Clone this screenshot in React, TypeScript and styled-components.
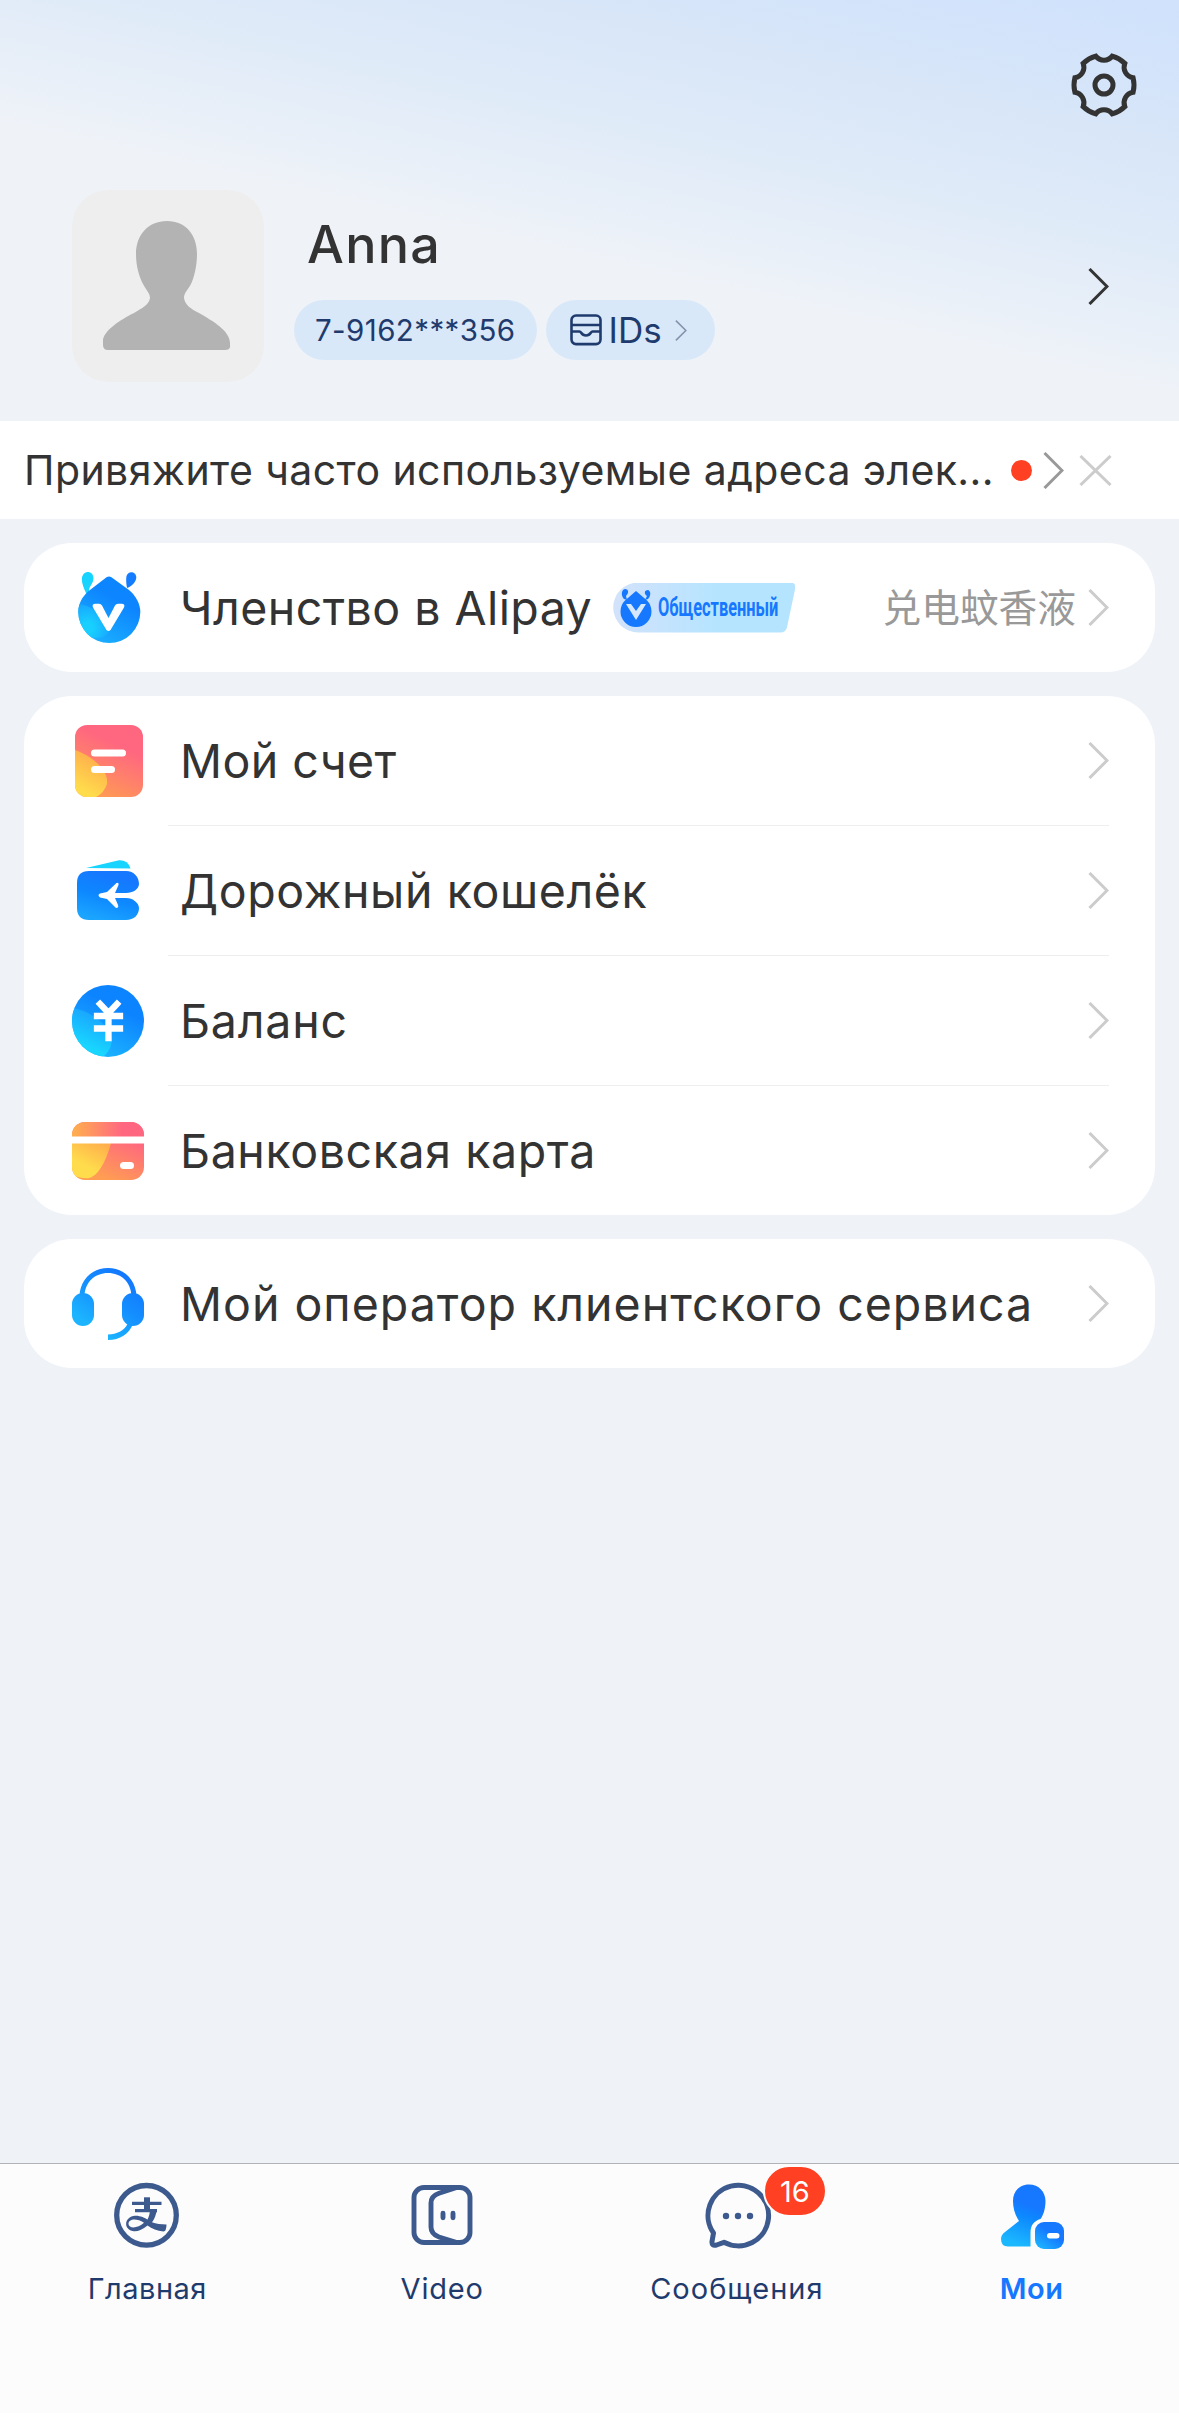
import React from "react";
import styled, { createGlobalStyle } from "styled-components";

const Global = createGlobalStyle`
  *{box-sizing:border-box}
  body{margin:0;background:#eff3f8}
`;

const Screen = styled.main`
  width: 1179px;
  height: 2413px;
  display: flex;
  flex-direction: column;
  overflow: hidden;
  background: #eff3f8;
  color: #333;
  font-family: Inter, "Liberation Sans", "Noto Sans CJK SC", sans-serif;
`;

const Header = styled.header`
  height: 421px;
  flex: none;
  padding: 50px 40px 0 72px;
  background: linear-gradient(193deg, #d0e2fc 0%, #d2e3fb 8%, #d8e6f8 21%, #e0ebf8 37%, #e8eff8 48%, #eff3f8 57%);
`;

const TopBar = styled.div`
  display: flex;
  justify-content: flex-end;
  height: 140px;
`;

const Profile = styled.section`
  display: flex;
  align-items: center;
  height: 192px;
  padding-right: 30px;
`;

const Avatar = styled.div`
  width: 192px;
  height: 192px;
  border-radius: 36px;
  background: #eee;
  overflow: hidden;
`;

const Identity = styled.div`
  flex: 1;
  align-self: stretch;
  margin-left: 30px;
  padding-top: 20px;
`;

const Name = styled.h1`
  margin: 0 0 20px 13px;
  height: 70px;
  font-size: 52px;
  line-height: 70px;
  font-weight: 450;
  letter-spacing: 1.3px;
`;

const Pills = styled.div`
  display: flex;
  gap: 9px;
`;

const Pill = styled.div<{ $width: number; $pad: number; $size: number; $spacing: number }>`
  width: ${(p) => p.$width}px;
  height: 60px;
  border-radius: 30px;
  background: #d9e8f8;
  color: #1f3b6d;
  display: flex;
  align-items: center;
  padding-left: ${(p) => p.$pad}px;
  font-size: ${(p) => p.$size}px;
  letter-spacing: ${(p) => p.$spacing}px;
`;

const PillText = styled.span`
  margin: 0 13px 0 7px;
`;

const Notice = styled.section`
  height: 98px;
  flex: none;
  background: #fff;
  display: flex;
  align-items: center;
  padding-left: 24px;
`;

const NoticeText = styled.span`
  width: 987px;
  font-size: 41px;
  letter-spacing: 0.42px;
  white-space: nowrap;
`;

const Dot = styled.i`
  width: 21px;
  height: 21px;
  border-radius: 50%;
  background: #ff4023;
  margin-right: 11px;
`;

const CloseSlot = styled.span`
  margin-left: 15px;
  display: flex;
`;

const Groups = styled.div`
  flex: 1;
  padding: 24px;
  display: flex;
  flex-direction: column;
  gap: 24px;
`;

const Card = styled.section`
  background: #fff;
  border-radius: 48px;
  padding: 0 46px 0 48px;
`;

const Row = styled.div`
  height: 129px;
  display: flex;
  align-items: center;
`;

const Divider = styled.div`
  height: 1px;
  margin-left: 96px;
  background: #eee;
`;

const IconSlot = styled.span`
  width: 72px;
  height: 72px;
  display: flex;
`;

const Label = styled.span<{ $spacing: number }>`
  margin-left: 36px;
  font-size: 46.5px;
  letter-spacing: ${(p) => p.$spacing}px;
  white-space: nowrap;
`;

const Spacer = styled.span`
  flex: 1;
`;

const Hint = styled.span`
  color: #999;
  font-family: "Noto Sans CJK SC", sans-serif;
  font-size: 38.7px;
  line-height: 50px;
  font-weight: 400;
  margin: 0 12px 6px 0;
`;

const Level = styled.span`
  width: 182px;
  height: 50px;
  margin-left: 21px;
  display: flex;
  align-items: center;
  padding-left: 7px;
  background: linear-gradient(90deg, #d3e2fb, #b5e4ff 58%);
  clip-path: path("M25 0H177Q183 0 182 6L174 44Q173 50 167 50H25A25 25 0 0 1 25 0Z");
`;

const LevelText = styled.span`
  margin-left: 6px;
  width: 120px;
  font-family: Roboto, sans-serif;
  font-weight: 700;
  font-size: 25px;
  color: #1677ff;
  white-space: nowrap;
  transform: scaleX(0.655);
  transform-origin: left;
`;

const TabBar = styled.nav`
  height: 250px;
  flex: none;
  background: #fcfcfc;
  border-top: 1px solid #b1b3b6;
  display: grid;
  grid-template-columns: repeat(4, 1fr);
`;

const Tab = styled.div<{ $active?: boolean; $spacing: number }>`
  display: flex;
  flex-direction: column;
  align-items: center;
  padding-top: 15px;
  gap: 18px;
  font-size: 29px;
  line-height: 40px;
  letter-spacing: ${(p) => p.$spacing}px;
  color: ${(p) => (p.$active ? "#1677ff" : "#1f3b6d")};
  font-weight: ${(p) => (p.$active ? 600 : 400)};
`;

const TabIcon = styled.span`
  position: relative;
  width: 72px;
  height: 72px;
  display: flex;
`;

const Count = styled.b`
  position: absolute;
  left: 62px;
  top: -14px;
  width: 64px;
  height: 52px;
  border: 2px solid #fcfcfc;
  border-radius: 26px;
  background: #ff4023;
  color: #fff;
  font-weight: 400;
  font-size: 29px;
  line-height: 49px;
  letter-spacing: 0;
  text-align: center;
`;

const Chevron = ({ color = "#ccc", w = 21, h = 37, stroke = 3 }) => (
  <svg width={w} height={h} viewBox="0 0 21 37" fill="none">
    <path d="M1.5 1L19 18.5L1.5 36" stroke={color} strokeWidth={stroke} />
  </svg>
);

const gearPath = (() => {
  const pts: string[] = [];
  const pt = (r: number, deg: number) => {
    const a = (deg * Math.PI) / 180;
    return `${(35 + r * Math.cos(a)).toFixed(2)} ${(35 + r * Math.sin(a)).toFixed(2)}`;
  };
  const notches = [-90, -30, 30, 90, 150, 210];
  notches.forEach((n, i) => {
    pts.push(`${i ? "A30 30 0 0 1" : "M"} ${pt(30, n - 16)}`);
    pts.push(`A10.5 10.5 0 0 0 ${pt(30, n + 16)}`);
  });
  return pts.join(" ") + ` A30 30 0 0 1 ${pt(30, -106)}Z`;
})();

const Gear = () => (
  <svg width="70" height="70" viewBox="0 0 70 70" fill="none" stroke="#333" strokeWidth="5">
    <path d={gearPath} />
    <circle cx="35" cy="35" r="9" />
  </svg>
);

const Person = () => (
  <svg width="192" height="192" viewBox="0 0 192 192">
    <path
      fill="#b3b3b3"
      d="M95 31C114 31 125 45 125 64C125 76 122 88 119 94C115 101 112 103 112 108C113 115 119 119 127 123C141 131 158 141 158 153V155Q159 160 153 160H36Q31 160 31 155V151C31 141 48 130 62 123C70 118 77 115 78 108C78 103 74 100 71 94C67 86 64 76 64 64C64 45 76 31 95 31Z"
    />
  </svg>
);

const IdIcon = () => (
  <svg width="32" height="32" viewBox="0 0 32 32" fill="none" stroke="#1f3b6d" strokeWidth="2.6">
    <rect x="1.5" y="1.5" width="29" height="28.6" rx="4.5" />
    <path d="M2 11H30M2 17.5H9.5C11.5 17.5 11 21.5 16 21.5S20.5 17.5 22.5 17.5H30" />
  </svg>
);

const Close = () => (
  <svg width="33" height="31" viewBox="0 0 33 31" stroke="#ccc" strokeWidth="3">
    <path d="M1.5 1L31.5 30M31.5 1L1.5 30" />
  </svg>
);

const MemberIcon = () => (
  <svg width="72" height="72" viewBox="0 0 72 72">
    <defs>
      <linearGradient id="member" x1=".75" y1="0.1" x2=".25" y2="1">
        <stop offset=".3" stopColor="#0d85ff" />
        <stop offset="1" stopColor="#1cb4ff" />
      </linearGradient>
      <radialGradient id="memberGlow" cx=".35" cy=".7" r=".75">
        <stop offset=".2" stopColor="#18d0ff" />
        <stop offset="1" stopColor="#18a4ff" />
      </radialGradient>
      <clipPath id="memberClip">
        <path d="M34.500 5.200Q37 3.800 39.500 5.200L57 18C64 24 68.300 32 68.300 40A31 31 0 0 1 6.300 40C6.300 32 10 25 16 19.500Z" />
      </clipPath>
    </defs>
    <path d="M15 23C10.500 14 9.500 9 10 6C11-2 21-2 21.500 6C21.500 12 16.500 14 17 20Z" fill="#16d4ff" />
    <path d="M55 16C54 11 54 7 54.500 4C56-1.500 64-1 64.300 5.500C64 10 60 14 55 16Z" fill="#137cff" />
    <g clipPath="url(#memberClip)">
      <rect width="72" height="72" fill="url(#member)" />
      <path d="M4 32C20 32 40 48 37 60Q33 66 24 66H4Z" fill="url(#memberGlow)" />
    </g>
    <path
      d="M23.500 31.800H27Q29 32 30 33.500L36.500 46L43 33.500Q44 32 46 31.800H49.500Q53.500 32 52 35.500L38.500 58Q36.500 60 34.500 58L21 35.500Q19.500 32 23.500 31.800Z"
      fill="#fff"
    />
  </svg>
);

const LevelLogo = () => (
  <svg width="32" height="38" viewBox="0 0 32 38" fill="#1677ff">
    <path d="M16 2L27 11.5A15.5 15.5 0 1 1 5 11.5Z" />
    <path d="M4 10C1 7 1 1 5 0C9 0 9 4 6 7L7 11ZM28 10C31 7 31 2 28 1C24 1 24 5 27 7L25 11Z" />
    <path d="M6 15H11L16 22L21 15H26L16 31Z" fill="#d5e8fd" />
  </svg>
);

const BillIcon = () => (
  <svg width="72" height="72" viewBox="0 0 72 72">
    <defs>
      <linearGradient id="bill" x1=".7" y1="0" x2=".25" y2="1">
        <stop offset=".25" stopColor="#ff6780" />
        <stop offset=".6" stopColor="#ff806b" />
        <stop offset="1" stopColor="#ff9f50" />
      </linearGradient>
      <linearGradient id="billSun" x1=".7" y1="0" x2=".3" y2="1">
        <stop offset=".1" stopColor="#ffab4c" />
        <stop offset=".9" stopColor="#ffdc4c" />
      </linearGradient>
      <clipPath id="billClip"><rect x="3" width="68" height="72" rx="12" /></clipPath>
    </defs>
    <g clipPath="url(#billClip)">
      <rect x="3" width="68" height="72" fill="url(#bill)" />
      <path d="M3 25C18 30 37 44 35 59Q32 68 24 72H3Z" fill="url(#billSun)" />
    </g>
    <rect x="19" y="24.5" width="35" height="7" rx="3.5" fill="#fff" />
    <rect x="19" y="41" width="24" height="7" rx="3.5" fill="#fff" />
  </svg>
);

const WalletIcon = () => (
  <svg width="72" height="72" viewBox="0 0 72 72">
    <defs>
      <linearGradient id="wallet" x1=".7" y1="0" x2=".35" y2="1">
        <stop offset=".1" stopColor="#1677ff" />
        <stop offset=".55" stopColor="#0d88ff" />
        <stop offset="1" stopColor="#1ba5ff" />
      </linearGradient>
    </defs>
    <path d="M14 13L47 5.3Q56 5 58.5 13.5Z" fill="#18d4ff" />
    <path
      fill="url(#wallet)"
      d="M17 16H54C62 16 67 22 67 29C67 34 61 38 54 38H43L46.5 30Q47 27 44.5 28L35 37L28 38.5Q25 40 28 42.5L35 44L44 53Q47 53 46 50L43 43H54C61 43 67 48 67 53C67 60 62 65 54 65H17Q5 65 5 53V28Q5 16 17 16Z"
    />
  </svg>
);

const YenIcon = () => (
  <svg width="72" height="72" viewBox="0 0 72 72">
    <defs>
      <linearGradient id="yen" x1=".75" y1=".1" x2=".3" y2="1">
        <stop offset=".25" stopColor="#0d84ff" />
        <stop offset="1" stopColor="#1cb8ff" />
      </linearGradient>
      <linearGradient id="yenGlow" x1=".7" y1="0" x2=".4" y2=".8">
        <stop offset=".1" stopColor="#1a9fff" />
        <stop offset="1" stopColor="#18d6ff" />
      </linearGradient>
      <clipPath id="yenClip"><circle cx="36" cy="36" r="36" /></clipPath>
    </defs>
    <g clipPath="url(#yenClip)">
      <rect width="72" height="72" fill="url(#yen)" />
      <path d="M0 23C18 25 40 42 40 56Q38 68 30 72H0Z" fill="url(#yenGlow)" />
    </g>
    <path
      d="M28 19L36.5 28L45 19M25 31H48M25 43.5H48M36.5 28V53"
      stroke="#fff"
      strokeWidth="6.3"
      strokeLinejoin="round"
      strokeLinecap="square"
      fill="none"
    />
  </svg>
);

const BankIcon = () => (
  <svg width="72" height="72" viewBox="0 0 72 72">
    <defs>
      <linearGradient id="bank" x1=".8" y1=".1" x2=".3" y2="1">
        <stop offset=".15" stopColor="#ff6780" />
        <stop offset=".9" stopColor="#ff9d53" />
      </linearGradient>
      <linearGradient id="bankSun" x1=".7" y1="0" x2=".3" y2=".8">
        <stop offset=".1" stopColor="#ffab4c" />
        <stop offset=".9" stopColor="#ffdc4c" />
      </linearGradient>
      <linearGradient id="bankTop">
        <stop stopColor="#ffb04b" />
        <stop offset=".55" stopColor="#ff7777" />
        <stop offset=".7" stopColor="#ff6780" />
      </linearGradient>
      <clipPath id="bankClip"><rect y="7" width="72" height="58" rx="13" /></clipPath>
    </defs>
    <g clipPath="url(#bankClip)">
      <rect y="7" width="72" height="58" fill="url(#bank)" />
      <path d="M0 20H41C37 38 29 60 17 63Q10 64 0 60Z" fill="url(#bankSun)" />
      <rect y="7" width="72" height="15" fill="url(#bankTop)" />
      <rect y="21.5" width="72" height="7" fill="#fff" />
    </g>
    <rect x="48" y="47" width="14" height="7" rx="3.5" fill="#fff" />
  </svg>
);

const HeadsetIcon = () => (
  <svg width="72" height="72" viewBox="0 0 72 72">
    <defs>
      <linearGradient id="headset" gradientUnits="userSpaceOnUse" x1="58" y1="8" x2="22" y2="60">
        <stop offset="0" stopColor="#1277ff" />
        <stop offset=".5" stopColor="#1490ff" />
        <stop offset="1" stopColor="#1cb4ff" />
      </linearGradient>
    </defs>
    <g fill="url(#headset)">
      <rect y="25" width="22" height="33" rx="11" />
      <rect x="50" y="25" width="22" height="33" rx="11" />
      <path d="M7.5 28C8 12 20 0 36 0S64 12 64.5 28H59.5C59 14 49 5 36 5S13 14 12.5 28Z" />
      <path d="M61 56C57 66 48 72 36 72V66.5C45 66 52 63 55.5 56Z" />
    </g>
  </svg>
);

const HomeIcon = () => (
  <svg width="72" height="72" viewBox="0 0 72 72" fill="none" stroke="#3d5a8e">
    <circle cx="35.5" cy="36.3" r="29.8" strokeWidth="5.3" />
    <path d="M21 24.4H50.5M24 31.7H46" strokeWidth="3.2" />
    <path d="M36 18.3V31" strokeWidth="6" />
    <path
      fill="#3d5a8e"
      stroke="none"
      d="M39 30H46C45 36 43.5 40 41 43.2C45 45 50 45.3 55.5 45.5Q55.5 52 52.5 52.5C46 52 41 49.500 36.500 46.5C31 51 26 53 21.500 52C12 50 13.500 37.500 24 36.800C29 36.500 34 39 36.500 40.500C38 37.500 39 34 39 30ZM33 43.800C26 39 17.500 39.500 17.500 45C18 50 27 49.500 33 43.800Z"
    />
  </svg>
);

const VideoIcon = () => (
  <svg width="72" height="72" viewBox="0 0 72 72" fill="none" stroke="#3d5a8e" strokeWidth="4.9">
    <rect x="8" y="8.5" width="56" height="55" rx="10" />
    <path d="M50 8.7L33 14.2Q25 17 25 24V48Q25 55 33 58L50 63.400" />
    <path d="M37 34.300V38.700M47 34.300V38.700" strokeLinecap="round" />
  </svg>
);

const ChatIcon = () => (
  <svg width="72" height="72" viewBox="0 0 72 72" fill="none" stroke="#3d5a8e" strokeWidth="5">
    <path
      strokeLinejoin="round"
      d="M12.5 54A30.3 30.3 0 1 1 23 63.3L15.500 66Q10.500 67.500 11 62.500Z"
    />
    <g fill="#3d5a8e" stroke="none">
      <circle cx="25" cy="37" r="3.2" />
      <circle cx="37" cy="37" r="3.2" />
      <circle cx="49" cy="37" r="3.2" />
    </g>
  </svg>
);

const MineIcon = () => (
  <svg width="72" height="72" viewBox="0 0 72 72">
    <defs>
      <linearGradient id="mine" gradientUnits="userSpaceOnUse" x1="42" y1="10" x2="22" y2="66">
        <stop offset=".3" stopColor="#1677ff" />
        <stop offset=".5" stopColor="#0d88ff" />
        <stop offset="1" stopColor="#1cb8ff" />
      </linearGradient>
      <linearGradient id="mineCard" x1=".8" y1=".2" x2=".2" y2="1">
        <stop offset=".3" stopColor="#1677ff" />
        <stop offset="1" stopColor="#1cb4ff" />
      </linearGradient>
    </defs>
    <path
      fill="url(#mine)"
      d="M33 5.5C43 5.5 49.5 13 49.5 22C49.5 30 47 37 44.5 40C38 42 34.5 46 34.5 54V67.5H12Q5 67.5 5 60Q5 56 9 53L23 42C19 36 17 29 17 22C17 13 23 5.5 33 5.5Z"
    />
    <rect x="39" y="43" width="29" height="27" rx="9" fill="url(#mineCard)" />
    <rect x="51" y="54" width="12.5" height="5.5" rx="2.7" fill="#fff" />
  </svg>
);

const accountRows = [
  { label: "Мой счет", icon: <BillIcon />, spacing: 0.45 },
  { label: "Дорожный кошелёк", icon: <WalletIcon />, spacing: 0.6 },
  { label: "Баланс", icon: <YenIcon />, spacing: 0.8 },
  { label: "Банковская карта", icon: <BankIcon />, spacing: 0.6 },
];

export default function App() {
  return (
    <Screen>
      <Global />
      <Header>
        <TopBar><Gear /></TopBar>
        <Profile>
          <Avatar><Person /></Avatar>
          <Identity>
            <Name>Anna</Name>
            <Pills>
              <Pill $width={243} $pad={21} $size={29.5} $spacing={0.4}>7-9162***356</Pill>
              <Pill $width={169} $pad={23.5} $size={35} $spacing={0}>
                <IdIcon />
                <PillText>IDs</PillText>
                <Chevron color="#8594ab" w={12} h={21} stroke={2.8} />
              </Pill>
            </Pills>
          </Identity>
          <Chevron color="#333" />
        </Profile>
      </Header>
      <Notice>
        <NoticeText>Привяжите часто используемые адреса элек...</NoticeText>
        <Dot />
        <Chevron color="#999" />
        <CloseSlot><Close /></CloseSlot>
      </Notice>
      <Groups>
        <Card>
          <Row>
            <IconSlot><MemberIcon /></IconSlot>
            <Label $spacing={0.45}>Членство в Alipay</Label>
            <Level><LevelLogo /><LevelText>Общественный</LevelText></Level>
            <Spacer />
            <Hint>兑电蚊香液</Hint>
            <Chevron />
          </Row>
        </Card>
        <Card>
          {accountRows.map((row, i) => (
            <React.Fragment key={row.label}>
              {i > 0 && <Divider />}
              <Row>
                <IconSlot>{row.icon}</IconSlot>
                <Label $spacing={row.spacing}>{row.label}</Label>
                <Spacer />
                <Chevron />
              </Row>
            </React.Fragment>
          ))}
        </Card>
        <Card>
          <Row>
            <IconSlot><HeadsetIcon /></IconSlot>
            <Label $spacing={1}>Мой оператор клиентского сервиса</Label>
            <Spacer />
            <Chevron />
          </Row>
        </Card>
      </Groups>
      <TabBar>
        <Tab $spacing={0.5}><TabIcon><HomeIcon /></TabIcon>Главная</Tab>
        <Tab $spacing={0.8}><TabIcon><VideoIcon /></TabIcon>Video</Tab>
        <Tab $spacing={1}><TabIcon><ChatIcon /><Count>16</Count></TabIcon>Сообщения</Tab>
        <Tab $spacing={0.6} $active><TabIcon><MineIcon /></TabIcon>Мои</Tab>
      </TabBar>
    </Screen>
  );
}
